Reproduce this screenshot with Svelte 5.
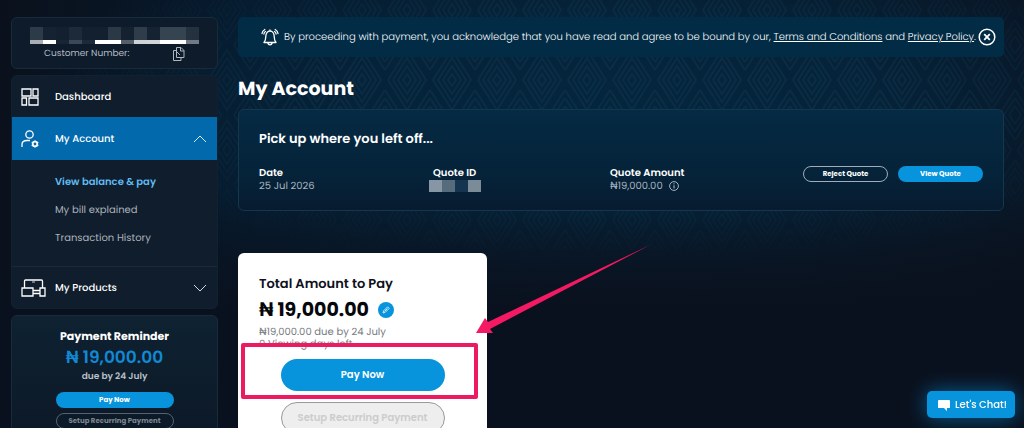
<script>
  const subItems = ['View balance & pay', 'My bill explained', 'Transaction History'];
  const nameBlocks = ['#2d3a48', '#142231', '#122030', '#1c2a3a', '#122030', '#122030', '#2b3846', '#132131', '#2f3c49', '#142231', '#364350', '#364350', '#243240'];
  const nameLine = ['#a9aeb4', '#fff', '#172535', '#3d4855', '#1c2a39', '#fff', '#fff', '#545f6a', '#d0d3d6', '#d2d5d8', '#fff', '#fff', '#727b85'];
  const idBlocks = ['#8796a4', '#566c7c', '#153450', '#7b8b98'];
</script>

<div class="page">
  <svg class="pattern" aria-hidden="true">
    <defs>
      <pattern id="weave" width="45" height="70" patternUnits="userSpaceOnUse" x="25" y="45">
        <g fill="none" stroke="#1b4a63" stroke-width="2">
          <path d="M22 29l4 6-4 6-4-6z M22 21l9 14-9 14-9-14z M22 13l14 22-14 22L8 35z M22 5l19 30-19 30L3 35z" />
          <path d="M0 9l6-9 M0 17L11 0 M0 25L16 0 M45 9l-6-9 M45 17L34 0 M45 25L29 0 M0 61l6 9 M0 53l11 17 M0 45l16 25 M45 61l-6 9 M45 53L34 70 M45 45L29 70" />
        </g>
      </pattern>
    </defs>
    <rect width="100%" height="100%" fill="url(#weave)" />
  </svg>

  <aside>
    <section class="panel customer">
      <div class="redacted" aria-hidden="true">
        {#each nameBlocks as color, i}
          <i style="background: {color}; border-color: {nameLine[i]}"></i>
        {/each}
      </div>
      <div class="number">
        <span>Customer Number:</span>
        <button aria-label="Copy customer number">
          <svg width="12" height="14" viewBox="0 0 12 14" fill="none" stroke="#aeb6be"><path d="M3.500 3.500h-3v10h7.500v-3 M3.500.5h4.500l3 3v7h-7.500z M7.500.5v3.500h3.500 M4 5l3 3" /></svg>
        </button>
      </div>
    </section>

    <nav class="panel">
      <a class="item" href="#dashboard">
        <svg width="24" height="18" viewBox="0 0 24 18" fill="none" stroke="#fff" stroke-width="1.300"><path d="M1 1h9v7H1z M12 1h5v7h-5z M1 10h4.500v7H1z M8 10h9v7H8z" /></svg>
        <span>Dashboard</span>
      </a>
      <a class="item active" href="#account">
        <svg width="24" height="18" viewBox="0 0 24 18" fill="none" stroke="#fff" stroke-width="1.300"><circle cx="8.500" cy="4.500" r="3.700" /><path d="M1 17v-2.500c0-3 2-4 5-4h3" /><circle cx="14" cy="14" r="2.300" stroke-width="1.800" /><path d="M14 10.500v1 M14 16.500v1 M10.700 12.200l1 .6 M16.300 15.200l1 .6 M10.700 15.800l1-.6 M16.300 12.800l1-.6" /></svg>
        <span>My Account</span>
        <svg class="chevron" width="14" height="8" viewBox="0 0 14 8" fill="none" stroke="#d9eaf6"><path d="M1 7l6-6 6 6" /></svg>
      </a>
      <ul>
        {#each subItems as label, i}
          <li><a class:current={i === 0} href="#account-{i}">{label}</a></li>
        {/each}
      </ul>
      <a class="item products" href="#products">
        <svg width="25" height="18" viewBox="0 0 25 18" fill="none" stroke="#fff" stroke-width="1.300"><path d="M3.500 9V2q0-1 1-1h16q1 0 1 1v7 M1 9h11v8H1z M12 11.500h7v3h-7z M19 9h5v8h-5z" /><path d="M11 3h3" stroke="#8b95a0" /></svg>
        <span>My Products</span>
        <svg class="chevron" width="14" height="8" viewBox="0 0 14 8" fill="none" stroke="#d5dae0"><path d="M1 1l6 6 6-6" /></svg>
      </a>
    </nav>

    <section class="panel reminder">
      <h2>Payment Reminder</h2>
      <strong class="sum">₦ 19,000.00</strong>
      <span class="due">due by 24 July</span>
      <button class="pill primary">Pay Now</button>
      <button class="pill ghost muted">Setup Recurring Payment</button>
    </section>
  </aside>

  <main>
    <div class="notice">
      <svg width="18" height="18" viewBox="0 0 18 18" fill="none" stroke="#fff" stroke-width="1.300" stroke-linecap="round" stroke-linejoin="round"><path d="M9 2v1 M3 14.500c1.500-2 1.800-3 1.800-6C4.800 5.500 6.500 3 9 3s4.200 2.500 4.200 5.500c0 3 .3 4 1.800 6z M7 15.500c.5 1.700 3.500 1.700 4 0 M3.800 1.500C2.300 2.300 1.200 3.500 1 5.500 M4.500 3.500C3.600 4 3 5 2.900 6 M14.200 1.500c1.500.8 2.600 2 2.800 4 M13.500 3.500c.9.500 1.500 1.500 1.600 2.500" /></svg>
      <p>By proceeding with payment, you acknowledge that you have read and agree to be bound by our, <a href="#terms">Terms and Conditions</a> and <a href="#privacy">Privacy Policy</a>.</p>
      <button aria-label="Dismiss">
        <svg width="18" height="18" viewBox="0 0 18 18" fill="none" stroke="#fff" stroke-width="1.500"><circle cx="9" cy="9" r="7.800" /><path d="M6.200 6.200l5.600 5.600 M11.800 6.200l-5.600 5.600" stroke-width="1.800" /></svg>
      </button>
    </div>

    <h1>My Account</h1>

    <section class="panel quote">
      <h2>Pick up where you left off...</h2>
      <div class="columns">
        <dl><dt>Date</dt><dd>25 Jul 2026</dd></dl>
        <dl class="quote-id"><dt>Quote ID</dt><dd aria-hidden="true">{#each idBlocks as color}<i style="background: {color}"></i>{/each}</dd></dl>
        <dl>
          <dt>Quote Amount</dt>
          <dd>₦19,000.00 <svg width="10" height="10" viewBox="0 0 10 10" fill="none" stroke="#b9c5cf"><circle cx="5" cy="5" r="4.400" stroke-width=".9" /><path d="M5 4.300v3.200 M5 2.300v1.100" /></svg></dd>
        </dl>
        <div class="actions">
          <button class="pill ghost">Reject Quote</button>
          <button class="pill primary">View Quote</button>
        </div>
      </div>
    </section>

    <section class="pay">
      <h2>Total Amount to Pay</h2>
      <div class="amount">
        <strong>₦ 19,000.00</strong>
        <button aria-label="Edit amount">
          <svg width="16" height="16" viewBox="0 0 16 16"><circle cx="8" cy="8" r="8" fill="#0894dc" /><path d="M5 11l.6-2.200 4-4 1.600 1.600-4 4z M6.500 9.500l3-3" fill="none" stroke="#d8effb" stroke-width=".9" /></svg>
        </button>
      </div>
      <p>₦19,000.00 due by 24 July</p>
      <p>0 Viewing days left</p>
      <div class="pay-action">
        <button class="big primary">Pay Now</button>
        <div class="highlight"></div>
        <svg class="arrow" width="176" height="90" viewBox="0 0 176 90" aria-hidden="true"><path d="M174 0L12 77 9 73 0 88 17 88 14 84z" fill="#f31962" /></svg>
      </div>
      <button class="big disabled" disabled>Setup Recurring Payment</button>
    </section>
  </main>

  <button class="chat">
    <svg width="12" height="12" viewBox="0 0 12 12" fill="#fff"><path d="M1 1h10q1 0 1 1v7H9v3L6 9H0V2q0-1 1-1z" /></svg>
    Let's Chat!
  </button>
</div>

<style>
  :global(body) { margin: 0; background: #0a111e; }
  * { box-sizing: border-box; }
  .page {
    position: relative;
    display: grid;
    grid-template-columns: 207px minmax(0, 1fr);
    gap: 20px;
    height: 100vh;
    overflow: hidden;
    padding: 17px 20px 0 11px;
    color: #fff;
    background:
      radial-gradient(ellipse 56% 50% at 60% 26%, #04263d 0%, #05233a 45%, transparent 100%),
      linear-gradient(90deg, #0a111c, #07182a 24%, #091521 60%, #0a121f);
    font-family: Poppins, Inter, sans-serif;
    font-size: 10px;
    line-height: 14px;
    text-rendering: geometricPrecision;
  }
  .page::before {
    content: "";
    position: absolute;
    inset: 0;
    background: linear-gradient(transparent 45%, #0a111e 72%);
  }
  .pattern {
    position: absolute;
    inset: 0;
    width: 100%;
    height: 250px;
    opacity: .24;
    -webkit-mask-image: radial-gradient(ellipse 60% 70% at 60% 38%, #000 45%, transparent 100%);
    mask-image: radial-gradient(ellipse 60% 70% at 60% 38%, #000 45%, transparent 100%);
  }
  aside, main { position: relative; display: flex; flex-direction: column; min-width: 0; }
  aside { gap: 6px; }
  h1, h2, p, dl, dd, ul { margin: 0; padding: 0; }
  h2 { font-weight: 600; }
  ul { list-style: none; }
  a { color: inherit; }
  button { margin: 0; padding: 0; border: 0; background: none; color: inherit; font: inherit; }
  svg { display: block; flex: none; }
  .panel { border: 1px solid #172b3a; border-radius: 6px; background: #101d2c; }

  .customer { display: flex; flex-direction: column; align-items: center; gap: 3px; height: 52px; flex: none; padding-top: 9px; background: #0d1b2b; }
  .redacted { display: flex; }
  .redacted i { width: 13px; height: 17px; border-bottom: 4px solid; }
  .number { display: flex; align-items: center; justify-content: space-between; width: 141px; color: #b5bcc4; font-size: 9px; }

  nav.panel { overflow: hidden; flex: none; border-color: #122130; }
  .item { display: flex; align-items: center; gap: 10px; height: 41px; padding: 0 10px 0 9px; text-decoration: none; font-weight: 500; }
  .item.active { margin: 0 -1px; padding: 0 11px 0 10px; height: 43px; background: #0369ad; }
  .chevron { margin-left: auto; }
  nav ul { display: flex; flex-direction: column; gap: 14px; padding: 15px 0 21px 43px; color: #aab2bb; }
  nav li a { text-decoration: none; }
  nav .current { color: #5fbcf2; font-weight: 600; }
  .item.products { height: 42px; gap: 9px; border-top: 1px solid #172a39; }

  .reminder { display: flex; flex-direction: column; align-items: center; flex: none; height: 150px; padding-top: 11px; background: linear-gradient(#0e2232, #0c1624); }
  .reminder h2 { font-size: 11px; line-height: 18px; font-weight: 700; }
  .reminder .sum { color: #1189d4; font-size: 17px; line-height: 25px; font-weight: 600; }
  .reminder .due { margin-bottom: 8px; color: #b9c0c8; font-size: 9px; font-weight: 600; }
  .reminder .pill { width: 118px; margin-bottom: 5px; }
  .pill { height: 16px; border-radius: 8px; font-size: 7px; line-height: 8px; font-weight: 700; }
  .primary { background: #0894dc; color: #fff; }
  .ghost { border: 1px solid #a0adb8; }
  .muted { border-color: #56636f; color: #7d8791; }

  .notice { display: flex; align-items: center; gap: 5px; height: 40px; flex: none; padding: 0 8px 0 23px; border-radius: 5px; background: #022b45; }
  .notice p { flex: 1; min-width: 0; white-space: nowrap; font-weight: 300; }
  h1 { margin: 19px 0 8px; font-size: 19px; line-height: 25px; font-weight: 700; }

  .quote { flex: none; height: 102px; padding: 19px 20px 0 20px; border-color: #14374c; background: linear-gradient(#052a43, #052339 65%, #081b30); }
  .quote h2 { font-size: 13px; line-height: 20px; }
  .columns { display: grid; grid-template-columns: 170px 181px 1fr auto; margin-top: 17px; }
  dt { font-weight: 600; line-height: 13px; }
  dd { display: flex; align-items: center; gap: 6px; height: 13px; color: #a5b3bf; line-height: 13px; }
  .quote-id dt { padding-left: 4px; }
  .quote-id dd { gap: 0; }
  .quote-id i { width: 13px; height: 12px; }
  .actions { display: flex; gap: 10px; }
  .actions .pill { width: 85px; }

  .pay { width: 249px; flex: none; margin-top: 42px; padding: 21px 21px 30px; border-radius: 6px; background: #fff; color: #0d1120; }
  .pay h2 { font-size: 13px; line-height: 20px; }
  .amount { display: flex; align-items: center; gap: 9px; height: 31px; font-size: 19px; }
  .amount strong { font-weight: 700; color: #05070c; }
  .pay p { color: #777b80; line-height: 12px; }
  .pay > p:first-of-type { padding-top: 1px; }
  .pay-action { position: relative; margin-bottom: 11px; padding-top: 9px; }
  .big { display: block; width: 164px; height: 32px; margin: 0 auto; border-radius: 16px; font-weight: 600; }
  .disabled { border: 1px solid #999; background: #eee; color: #ccc; }
  .highlight { position: absolute; top: -7px; left: -18px; width: 237px; height: 56px; border: 4px solid #ec1b61; border-radius: 2px; }
  .arrow { position: absolute; top: -105px; left: 217px; }

  .chat { position: fixed; right: 9px; bottom: 10px; display: flex; align-items: center; gap: 5px; height: 27px; padding: 0 8px 0 11px; border-radius: 5px; background: #0894dc; box-shadow: 0 0 20px #075f95; font-weight: 500; }
</style>
